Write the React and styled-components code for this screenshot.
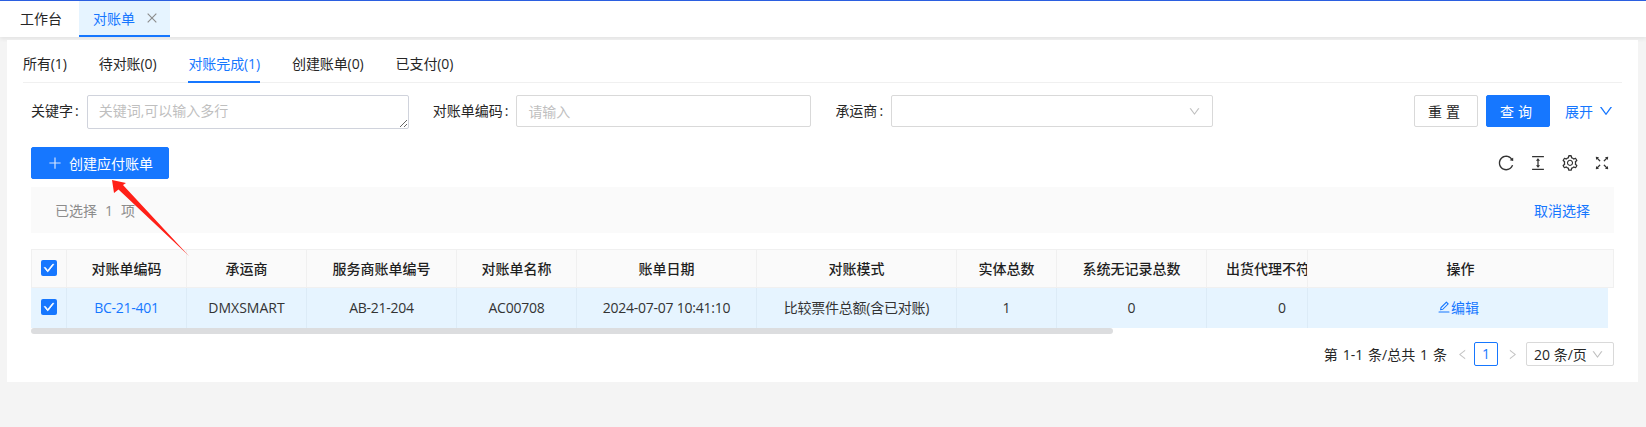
import React from "react";
import styled, { createGlobalStyle } from "styled-components";
import {
  AiOutlineClose,
  AiOutlineColumnHeight,
  AiOutlineDown,
  AiOutlineEdit,
  AiOutlineFullscreen,
  AiOutlineLeft,
  AiOutlinePlus,
  AiOutlineReload,
  AiOutlineRight,
  AiOutlineSetting,
  AiOutlineCheck,
} from "react-icons/ai";

const BLUE = "#1677ff";

const GlobalStyle = createGlobalStyle`
  * { box-sizing: border-box; }
  body {
    margin: 0;
    background: #f4f4f4;
    color: #262626;
    font-family: "Open Sans", "Noto Sans CJK SC", sans-serif;
    font-size: 14px;
  }
`;

const Page = styled.div`
  position: relative;
  height: 427px;
  overflow: hidden;
`;

const TopBar = styled.div`
  display: flex;
  height: 37px;
  background: #fff;
  border-top: 1px solid #2b5fe0;
  box-shadow: 0 2px 4px rgba(0, 0, 0, 0.07);
`;

const TopTab = styled.div`
  display: flex;
  align-items: center;
  gap: 10px;
  padding: 0 0 0 ${(p) => (p.$active ? "14px" : "20px")};
  width: ${(p) => (p.$active ? "91px" : "79px")};
  color: ${(p) => (p.$active ? BLUE : "#262626")};
  background: ${(p) => (p.$active ? "#e6f4ff" : "transparent")};
  border-bottom: 2px solid ${(p) => (p.$active ? BLUE : "transparent")};
  svg { color: #8c8c8c; font-size: 14px; flex: none; }
`;

const Card = styled.div`
  margin: 3px 8px 0 7px;
  height: 342px;
  padding: 0 16px;
  background: #fff;
`;

const StatusTabs = styled.div`
  display: flex;
  gap: 32px;
  height: 43px;
  border-bottom: 1px solid #f0f0f0;
`;

const StatusTab = styled.div`
  height: 43px;
  padding-top: 14px;
  line-height: 20px;
  letter-spacing: -0.1px;
  color: ${(p) => (p.$active ? BLUE : "#262626")};
  border-bottom: 2px solid ${(p) => (p.$active ? BLUE : "transparent")};
`;

const Content = styled.div`
  padding: 0 8px;
`;

const FilterRow = styled.div`
  display: flex;
  align-items: flex-start;
  margin-top: 12px;
  height: 34px;
`;

const Field = styled.div`
  display: flex;
  align-items: flex-start;
  margin-right: 24px;
`;

const Label = styled.label`
  margin-right: 8px;
  line-height: 32px;
  white-space: nowrap;
  &::after {
    content: ":";
    margin-left: 2px;
  }
`;

const TextArea = styled.textarea`
  display: block;
  width: 322px;
  height: 34px;
  padding: 5px 11px;
  font: inherit;
  line-height: 20px;
  border: 1px solid #d0d3dc;
  border-radius: 2px;
  outline: none;
  &::placeholder { color: #bfbfbf; }
`;

const Input = styled.input`
  width: 295px;
  height: 32px;
  padding: 0 11px;
  font: inherit;
  border: 1px solid #d9d9d9;
  border-radius: 2px;
  outline: none;
  &::placeholder { color: #bfbfbf; }
`;

const SelectBox = styled.div`
  display: flex;
  align-items: center;
  justify-content: flex-end;
  width: 322px;
  height: 32px;
  padding: 0 11px;
  border: 1px solid #d9d9d9;
  border-radius: 2px;
  color: #bfbfbf;
  svg { font-size: 13px; }
`;

const Actions = styled.div`
  display: flex;
  align-items: center;
  gap: 8px;
  margin-left: auto;
`;

const Button = styled.button`
  display: inline-flex;
  align-items: center;
  justify-content: center;
  height: 32px;
  width: ${(p) => p.$width}px;
  padding: 0;
  font: inherit;
  letter-spacing: ${(p) => (p.$spaced ? "4px" : "0")};
  color: ${(p) => (p.$primary ? "#fff" : "#262626")};
  background: ${(p) => (p.$primary ? BLUE : "#fff")};
  border: 1px solid ${(p) => (p.$primary ? BLUE : "#d9d9d9")};
  border-radius: 2px;
`;

const Expand = styled.div`
  display: flex;
  align-items: center;
  gap: 5px;
  margin-left: 7px;
  color: ${BLUE};
  svg { font-size: 16px; }
`;

const Toolbar = styled.div`
  display: flex;
  align-items: center;
  justify-content: space-between;
  margin-top: 18px;
`;

const PlusIcon = styled(AiOutlinePlus)`
  font-size: 16px;
  margin-right: 6px;
  color: #d6e6ff;
`;

const ToolIcons = styled.div`
  display: flex;
  align-items: center;
  gap: 14px;
  padding-right: 3px;
  font-size: 18px;
  color: #333;
  svg { display: block; }
`;

const SelectedBar = styled.div`
  display: flex;
  align-items: center;
  justify-content: space-between;
  height: 46px;
  margin-top: 8px;
  padding: 0 24px;
  background: #fafafa;
  color: #8c8c8c;
`;

const Count = styled.span`
  margin: 0 8px;
`;

const LinkText = styled.span`
  color: ${BLUE};
`;

const Table = styled.div`
  margin-top: 16px;
`;

const GridRow = styled.div`
  display: grid;
  grid-template-columns: 35px 120px 120px 150px 120px 180px 200px 100px 150px 101px 1fr;
`;

const HeadRow = styled(GridRow)`
  height: 39px;
  border: 1px solid #f0f0f0;
  background: #fafafa;
`;

const BodyRow = styled(GridRow)`
  width: 1577px;
  height: 40px;
  padding-left: 1px;
  background: #e6f4ff;
`;

const HeadCell = styled.div`
  display: flex;
  align-items: center;
  justify-content: center;
  padding-bottom: 2px;
  overflow: hidden;
  white-space: nowrap;
  font-weight: 500;
  color: #1f1f1f;
  border-right: 1px solid #f0f0f0;
  &:last-child { border-right: 0; }
`;

const BodyCell = styled.div`
  display: flex;
  align-items: center;
  justify-content: center;
  padding-bottom: 2px;
  overflow: hidden;
  white-space: nowrap;
  letter-spacing: ${(p) => (p.$digits ? "-0.25px" : "0")};
  color: ${(p) => (p.$link ? BLUE : "#333")};
  border-right: 1px solid #dcebf7;
  &:last-child { border-right: 0; }
`;

// this column runs on under the fixed action column
const Covered = styled.span`
  flex: none;
  width: 150px;
  margin-right: -50px;
  text-align: center;
`;

const Check = styled.span`
  display: inline-flex;
  align-items: center;
  justify-content: center;
  width: 16px;
  height: 16px;
  border-radius: 2px;
  background: ${BLUE};
  color: #fff;
  font-size: 12px;
  svg { stroke: #fff; stroke-width: 70; }
`;

const Scrollbar = styled.div`
  width: 1082px;
  height: 6px;
  border-radius: 3px;
  background: #dcdddf;
`;

const Pagination = styled.div`
  display: flex;
  align-items: center;
  justify-content: flex-end;
  height: 24px;
  margin-top: 8px;
`;

const Total = styled.span`
  margin-right: 9px;
  word-spacing: 1.25px;
`;

const PageArrow = styled.span`
  display: flex;
  color: #c4c4c4;
  font-size: 13px;
  margin: ${(p) => p.$margin};
`;

const PageNumber = styled.span`
  width: 24px;
  height: 24px;
  line-height: 22px;
  text-align: center;
  color: ${BLUE};
  border: 1px solid ${BLUE};
  border-radius: 2px;
`;

const SizeSelect = styled.div`
  display: flex;
  align-items: center;
  justify-content: space-between;
  width: 88px;
  height: 24px;
  padding: 0 9px 0 7px;
  border: 1px solid #d9d9d9;
  border-radius: 2px;
  svg { color: #bfbfbf; font-size: 13px; }
`;

const ArrowMark = styled.svg`
  position: absolute;
  left: 100px;
  top: 170px;
  pointer-events: none;
`;

const statusTabs = ["所有(1)", "待对账(0)", "对账完成(1)", "创建账单(0)", "已支付(0)"];
const headers = ["对账单编码", "承运商", "服务商账单编号", "对账单名称", "账单日期", "对账模式", "实体总数", "系统无记录总数"];
const row = ["BC-21-401", "DMXSMART", "AB-21-204", "AC00708", "2024-07-07 10:41:10", "比较票件总额(含已对账)", "1", "0"];

export default function App() {
  return (
    <Page>
      <GlobalStyle />
      <TopBar>
        <TopTab>工作台</TopTab>
        <TopTab $active>对账单<AiOutlineClose /></TopTab>
      </TopBar>
      <Card>
        <StatusTabs>
          {statusTabs.map((t) => (
            <StatusTab key={t} $active={t === "对账完成(1)"}>{t}</StatusTab>
          ))}
        </StatusTabs>
        <Content>
          <FilterRow>
            <Field>
              <Label>关键字</Label>
              <TextArea placeholder="关键词,可以输入多行" />
            </Field>
            <Field>
              <Label>对账单编码</Label>
              <Input placeholder="请输入" />
            </Field>
            <Field>
              <Label>承运商</Label>
              <SelectBox><AiOutlineDown /></SelectBox>
            </Field>
            <Actions>
              <Button $width={64} $spaced>重置</Button>
              <Button $width={64} $primary $spaced>查询</Button>
              <Expand>展开<AiOutlineDown /></Expand>
            </Actions>
          </FilterRow>
          <Toolbar>
            <Button $width={138} $primary><PlusIcon />创建应付账单</Button>
            <ToolIcons>
              <AiOutlineReload />
              <AiOutlineColumnHeight />
              <AiOutlineSetting />
              <AiOutlineFullscreen />
            </ToolIcons>
          </Toolbar>
          <SelectedBar>
            <span>已选择<Count>1</Count>项</span>
            <LinkText>取消选择</LinkText>
          </SelectedBar>
          <Table>
            <HeadRow>
              <HeadCell><Check><AiOutlineCheck /></Check></HeadCell>
              {headers.map((h) => <HeadCell key={h}>{h}</HeadCell>)}
              <HeadCell><Covered>出货代理不符总数</Covered></HeadCell>
              <HeadCell>操作</HeadCell>
            </HeadRow>
            <BodyRow>
              <BodyCell><Check><AiOutlineCheck /></Check></BodyCell>
              {row.map((c, i) => <BodyCell key={i} $link={i === 0} $digits={i !== 1}>{c}</BodyCell>)}
              <BodyCell><Covered>0</Covered></BodyCell>
              <BodyCell $link><AiOutlineEdit />编辑</BodyCell>
            </BodyRow>
            <Scrollbar />
          </Table>
          <Pagination>
            <Total>第 1-1 条/总共 1 条</Total>
            <PageArrow $margin="0 5px 0 0"><AiOutlineLeft /></PageArrow>
            <PageNumber>1</PageNumber>
            <PageArrow $margin="0 7px 0 8px"><AiOutlineRight /></PageArrow>
            <SizeSelect>20 条/页<AiOutlineDown /></SizeSelect>
          </Pagination>
        </Content>
      </Card>
      <ArrowMark width="100" height="95" viewBox="0 0 100 95">
        <path d="M12 10 L14 23 L18.5 19.5 L89 86 L23 15 L26 13 Z" fill="#ff2018" />
      </ArrowMark>
    </Page>
  );
}
